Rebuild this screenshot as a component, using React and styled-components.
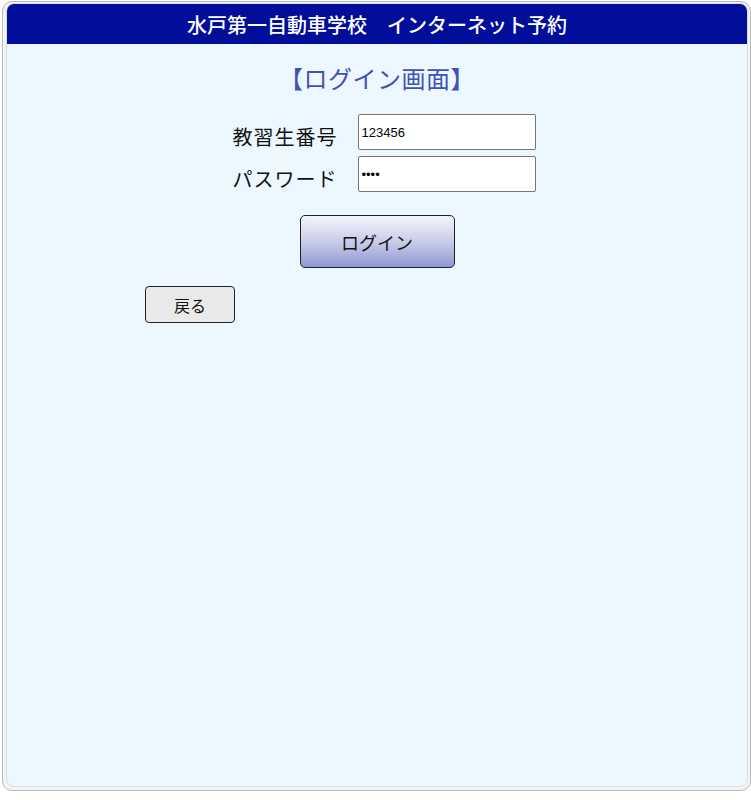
import styled, { createGlobalStyle } from 'styled-components';

const GlobalStyle = createGlobalStyle`
  html, body {
    margin: 0;
    padding: 0;
    background: #ffffff;
  }
  body {
    font-family: 'Noto Sans CJK JP', 'Noto Sans', sans-serif;
  }
`;

const Frame = styled.div`
  box-sizing: border-box;
  margin: 1px 0 0 2px;
  width: 749px;
  height: 790px;
  border: 1px solid #b8b8b8;
  border-radius: 10px;
  padding: 1px 2px 3px 3px;
  background: #f4f4f4;
  display: flex;
`;

const Panel = styled.div`
  flex: 1;
  display: flex;
  flex-direction: column;
  background: #edf7ff;
  border-radius: 8px;
  border: 1px solid #d6dde3;
  overflow: hidden;
`;

const Header = styled.div`
  height: 40px;
  background: #000e99;
  color: #ffffff;
  font-size: 20px;
  font-weight: 500;
  display: flex;
  align-items: center;
  justify-content: center;
  white-space: pre;
`;

const Title = styled.h1`
  margin: 17px 0 0;
  font-size: 24px;
  font-weight: 400;
  line-height: 34px;
  color: #4052b6;
  text-align: center;
  letter-spacing: 0.5px;
`;

const Form = styled.div`
  margin-top: 19px;
  display: grid;
  grid-template-columns: auto 178px;
  column-gap: 20px;
  row-gap: 6px;
  justify-content: center;
  align-items: center;
  padding-left: 14px;
`;

const Label = styled.label`
  padding-top: 10px;
  font-size: 20px;
  line-height: 26px;
  color: #111;
  letter-spacing: 1px;
`;

const Input = styled.input`
  box-sizing: border-box;
  width: 178px;
  height: 36px;
  border: 1px solid #767676;
  border-radius: 2px;
  background: #fff;
  padding: 0 3px;
  font-family: 'Liberation Sans', Arial, sans-serif;
  font-size: 13px;
  color: #000;
  outline: none;
`;

const LoginRow = styled.div`
  margin-top: 23px;
  display: flex;
  justify-content: center;
`;

const LoginButton = styled.button`
  box-sizing: border-box;
  width: 155px;
  height: 53px;
  border: 1px solid #222;
  border-radius: 5px;
  background: linear-gradient(to bottom, #f4f5fb 0%, #c4c8e8 55%, #8d97d2 100%);
  font-family: 'Noto Sans CJK JP', sans-serif;
  font-size: 18px;
  color: #111;
  cursor: pointer;
`;

const BackRow = styled.div`
  margin-top: 18px;
  padding-left: 138px;
`;

const BackButton = styled.button`
  box-sizing: border-box;
  width: 90px;
  height: 37px;
  border: 1px solid #222;
  border-radius: 4px;
  background: #e9e9e9;
  font-family: 'Noto Sans CJK JP', sans-serif;
  font-size: 16px;
  color: #111;
  cursor: pointer;
`;

export default function App() {
  return (
    <>
      <GlobalStyle />
      <Frame>
        <Panel>
          <Header>水戸第一自動車学校　インターネット予約</Header>
          <Title>【ログイン画面】</Title>
          <Form>
            <Label htmlFor="sid">教習生番号</Label>
            <Input id="sid" type="text" defaultValue="123456" />
            <Label htmlFor="pw">パスワード</Label>
            <Input id="pw" type="password" defaultValue="1234" />
          </Form>
          <LoginRow>
            <LoginButton>ログイン</LoginButton>
          </LoginRow>
          <BackRow>
            <BackButton>戻る</BackButton>
          </BackRow>
        </Panel>
      </Frame>
    </>
  );
}
